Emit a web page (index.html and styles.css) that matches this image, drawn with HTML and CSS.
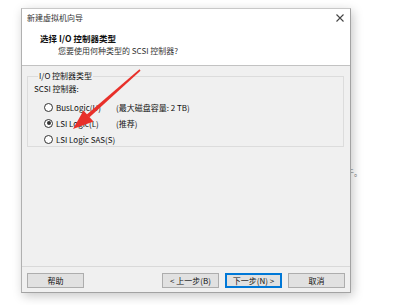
FILE: index.html
```html
<!DOCTYPE html>
<html lang="zh-CN">
<head>
    <meta charset="UTF-8">
    <meta name="viewport" content="width=device-width, initial-scale=1.0">
    <title>新建虚拟机向导</title>
    <link rel="stylesheet" href="styles.css">
</head>
<body>

<!-- text of the page behind the window -->
<span class="behind-text">于。</span>

<div class="dialog">
    <div class="header">
        <div class="titlebar">
            <span class="title">新建虚拟机向导</span>
            <svg class="close" width="8" height="8" viewBox="0 0 8 8">
                <path d="M0.5 0.5 L7.5 7.5 M7.5 0.5 L0.5 7.5" stroke="#444" stroke-width="1.1" fill="none"/>
            </svg>
        </div>
        <div class="heading">选择 I/O 控制器类型</div>
        <div class="subheading">您要使用何种类型的 SCSI 控制器?</div>
    </div>

    <div class="content">
        <fieldset class="group">
            <legend>I/O 控制器类型</legend>
            <div class="group-label">SCSI 控制器:</div>
            <div class="option">
                <span class="radio"></span>
                <span class="option-name">BusLogic(U)</span>
                <span class="option-note">(最大磁盘容量: 2 TB)</span>
            </div>
            <div class="option">
                <span class="radio checked"></span>
                <span class="option-name">LSI Logic(L)</span>
                <span class="option-note">(推荐)</span>
            </div>
            <div class="option">
                <span class="radio"></span>
                <span class="option-name">LSI Logic SAS(S)</span>
            </div>
        </fieldset>
    </div>

    <div class="footer">
        <button class="btn">帮助</button>
        <span class="spacer"></span>
        <button class="btn">&lt; 上一步(B)</button>
        <button class="btn btn-default">下一步(N) &gt;</button>
        <button class="btn">取消</button>
    </div>
</div>

<!-- red annotation arrow drawn over the window -->
<svg class="arrow" width="412" height="305" viewBox="0 0 412 305">
    <polygon points="139.5,69.3 140.5,70.7 89.5,117.2 86.5,114.8" fill="#e8302a"/>
    <polygon points="73,129 83.5,110.5 93.5,121.5" fill="#e8302a"/>
</svg>

</body>
</html>
```

FILE: styles.css
```css
body {
    margin: 0;
    padding: 0;
    background-color: #fff;
    font-family: "Noto Sans CJK SC", "Noto Sans", sans-serif;
    font-size: 8px;
    color: #111;
    position: relative;
    width: 412px;
    height: 305px;
    overflow: hidden;
}

.behind-text {
    position: absolute;
    left: 346px;
    top: 168px;
    font-size: 8px;
    line-height: 10px;
    color: #777;
    z-index: 0;
}

.dialog {
    position: relative;
    z-index: 1;
    box-sizing: border-box;
    width: 330px;
    height: 285px;
    margin: 8px 0 0 21px;
    border: 1px solid #a3a3a3;
    border-top-color: #c8c8c8;
    border-left-color: #b0b0b0;
    background-color: #f0f0f0;
    box-shadow: 2px 3px 10px rgba(0, 0, 0, 0.22);
    display: flex;
    flex-direction: column;
}

.header {
    background-color: #fff;
    height: 56px;
    border-bottom: 1px solid #c2c2c2;
}

.titlebar {
    display: flex;
    align-items: center;
    justify-content: space-between;
    height: 17px;
    padding: 0 6px 0 5px;
}

.title {
    font-size: 8px;
    color: #333;
}

.close {
    display: block;
}

.heading {
    margin-top: 6px;
    padding-left: 18px;
    font-weight: bold;
    font-size: 8.5px;
    line-height: 12px;
    font-family: "Noto Sans CJK SC", "Liberation Serif", serif;
}

.subheading {
    margin-top: 1px;
    padding-left: 36px;
    line-height: 12px;
    color: #333;
}

.content {
    flex: 1;
    padding: 5px 6px 0 5px;
}

.group {
    margin: 0;
    padding: 2px 0 0 6px;
    height: 72px;
    border: 1px solid #dcdcdc;
    min-width: 0;
}

.group legend {
    margin-left: 4px;
    padding: 0 1px;
    line-height: 10px;
}

.group-label {
    line-height: 12px;
    margin-bottom: 4px;
}

.option {
    display: flex;
    align-items: center;
    height: 16px;
    padding-left: 10px;
}

.radio {
    box-sizing: border-box;
    width: 9px;
    height: 9px;
    border: 1px solid #333;
    border-radius: 50%;
    background-color: #fff;
    margin-right: 3px;
    display: flex;
    align-items: center;
    justify-content: center;
}

.radio.checked::after {
    content: "";
    width: 4px;
    height: 4px;
    border-radius: 50%;
    background-color: #333;
}

.option-name {
    width: 60px;
}

.footer {
    display: flex;
    gap: 6px;
    height: 26px;
    box-sizing: border-box;
    padding: 6px 5px 4px 5px;
    border-top: 1px solid #d9d9d9;
}

.spacer {
    flex: 1;
}

.btn {
    box-sizing: border-box;
    width: 57px;
    height: 15px;
    padding: 0;
    border: 1px solid #adadad;
    background-color: #e1e1e1;
    font-family: "Noto Sans CJK SC", "Noto Sans", sans-serif;
    font-size: 8px;
    line-height: 13px;
    color: #111;
}

.btn-default {
    border: 1px solid #0078d7;
    box-shadow: inset 0 0 0 1px #0078d7;
}

.arrow {
    position: absolute;
    left: 0;
    top: 0;
    z-index: 2;
    pointer-events: none;
}
```
